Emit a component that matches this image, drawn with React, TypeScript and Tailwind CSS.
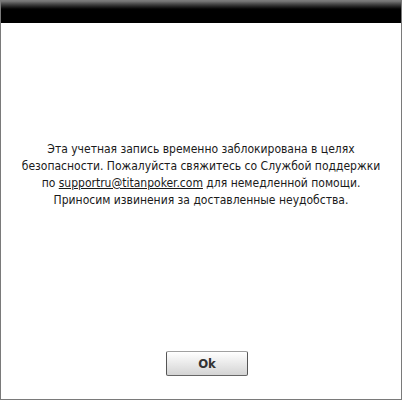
export default function App() {
  return (
    <div className="flex h-[400px] w-[402px] flex-col border border-[#7a7a7a] bg-white" style={{ fontFamily: '"DejaVu Sans Condensed", "DejaVu Sans", Tahoma, sans-serif' }}>
      {/* Title bar */}
      <div className="h-[22px] w-full bg-gradient-to-b from-[#7a7a7a] via-[#000000] via-45% to-[#000000]" />

      {/* Message */}
      <div className="mt-[118px] flex flex-col items-center text-center text-[12px] leading-[17px] text-[#1a1a1a]">
        <p className="whitespace-nowrap">
          Эта учетная запись временно заблокирована в целях
          <br />
          безопасности. Пожалуйста свяжитесь со Службой поддержки
          <br />
          по <a className="underline">supportru@titanpoker.com</a> для немедленной помощи.
          <br />
          Приносим извинения за доставленные неудобства.
        </p>
      </div>

      {/* Button */}
      <div className="mt-auto mb-[23px] flex justify-center">
        <button className="ml-[12px] flex h-[25px] w-[82px] items-center justify-center rounded-[2px] border border-[#a0a0a0] border-x-[#555555] border-b-[#666666] bg-gradient-to-b from-[#ffffff] to-[#d4d4d4] text-[13px] font-bold text-[#333333]">
          Ok
        </button>
      </div>
    </div>
  )
}
